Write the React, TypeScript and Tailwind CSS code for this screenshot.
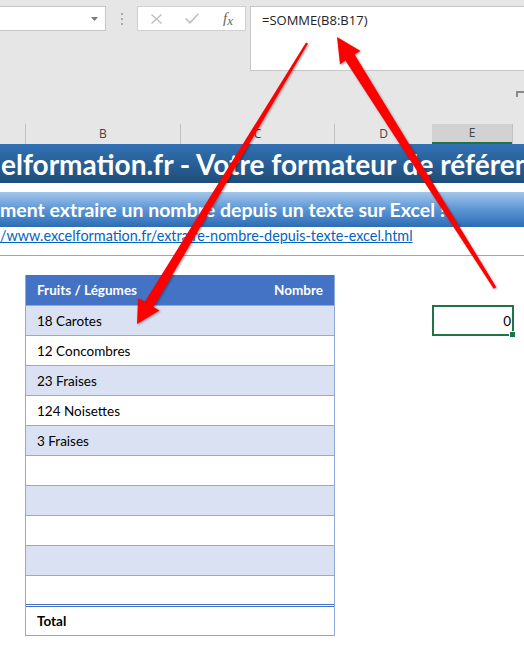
import React from "react";

const rows: { text: string; light: boolean }[] = [
  { text: "18 Carotes", light: true },
  { text: "12 Concombres", light: false },
  { text: "23 Fraises", light: true },
  { text: "124 Noisettes", light: false },
  { text: "3 Fraises", light: true },
  { text: "", light: false },
  { text: "", light: true },
  { text: "", light: false },
  { text: "", light: true },
];

export default function App() {
  return (
    <div className="relative w-[524px] h-[646px] overflow-hidden bg-white font-['Lato',sans-serif]">
      {/* Ribbon / formula bar */}
      <div className="bg-[#e6e6e6] h-[124px] flex flex-col">
        <div className="flex items-start pt-[6px] h-[71px]">
          <div className="w-[106px] h-[25px] bg-white border border-l-0 border-[#c6c6c6] flex items-center justify-end pr-[7px]">
            <svg width="7" height="4" viewBox="0 0 7 4">
              <path d="M0 0 H7 L3.5 4 Z" fill="#7a7a7a" />
            </svg>
          </div>
          <div className="w-[31px] h-[25px] flex flex-col items-center justify-center gap-[3px]">
            <div className="w-[2px] h-[2px] bg-[#a8a8a8]" />
            <div className="w-[2px] h-[2px] bg-[#a8a8a8]" />
            <div className="w-[2px] h-[2px] bg-[#a8a8a8]" />
          </div>
          <div className="w-[109px] h-[25px] bg-white border border-[#d0d0d0] flex items-center">
            <div className="w-[36px] flex justify-center">
              <svg width="11" height="10" viewBox="0 0 11 10">
                <path d="M0.5 0.5 L10.5 9.5 M10.5 0.5 L0.5 9.5" stroke="#bdbdbd" strokeWidth="1.3" fill="none" />
              </svg>
            </div>
            <div className="w-[35px] flex justify-center">
              <svg width="14" height="11" viewBox="0 0 14 11">
                <path d="M0.7 5.5 L5 9.8 L13.3 0.8" stroke="#bdbdbd" strokeWidth="1.5" fill="none" />
              </svg>
            </div>
            <div className="w-[36px] flex justify-center pl-[2px] font-['Liberation_Serif',serif] italic text-[15px] leading-none text-[#666]">
              <span>f</span>
              <span className="text-[13px] mt-[3px]">x</span>
            </div>
          </div>
          <div className="w-[4px]" />
          <div className="flex-1 h-[65px] bg-white border border-r-0 border-[#c6c6c6] pl-[11px] pt-[4px] text-[13px] leading-[18px] text-[#222] font-['Open_Sans',sans-serif]">
            =SOMME(B8:B17)
          </div>
        </div>
        <div className="flex-1 flex justify-end pt-[20px]">
          <div className="w-[8px] h-[6px] border-l-2 border-t-2 border-[#8a8a8a]" />
        </div>
      </div>

      {/* Column headers */}
      <div className="flex h-[20px] bg-[#e6e6e6] text-[12px] text-[#444] font-['Open_Sans',sans-serif]">
        <div className="w-[26px] border-r border-[#c0c0c0]" />
        <div className="w-[155px] border-r border-[#c0c0c0] flex items-center justify-center">B</div>
        <div className="w-[154px] border-r border-[#c0c0c0] flex items-center justify-center">C</div>
        <div className="w-[97px] flex items-center justify-center">D</div>
        <div className="w-[80px] bg-[#d2d2d2] border-b-2 border-[#217346] flex items-center justify-center">E</div>
        <div className="flex-1 border-l border-[#c0c0c0]" />
      </div>

      {/* Title */}
      <div className="h-[39px] bg-linear-to-b from-[#3272b5] to-[#1e4d7a] flex items-center whitespace-nowrap overflow-hidden text-white font-bold text-[28px] leading-none pl-[1px]">
        elformation.fr - Votre formateur de référence
      </div>
      <div className="h-[9px]" />
      <div className="h-[35px] bg-linear-to-b from-[#a3c6ea] via-[#5a95d4] to-[#2d6db5] flex items-center whitespace-nowrap overflow-hidden text-white font-bold text-[19.5px] leading-none">
        ment extraire un nombre depuis un texte sur Excel !
      </div>
      <div className="h-[29px] border-b border-[#a6a6a6] whitespace-nowrap overflow-hidden text-[14.4px] leading-[18px]">
        <span className="text-[#0563c1] underline">/www.excelformation.fr/extraire-nombre-depuis-texte-excel.html</span>
      </div>

      {/* Sheet body */}
      <div className="flex items-start mt-[19px] text-[13.5px] text-black">
        <div className="w-[25px]" />
        <div className="w-[310px] border-x border-[#8ea9db] flex flex-col">
          <div className="h-[30px] bg-[#4472c4] text-white font-bold flex items-center justify-between pl-[11px] pr-[11px] pt-[1px]">
            <span>Fruits / Légumes</span>
            <span>Nombre</span>
          </div>
          {rows.map((r, i) => (
            <div
              key={i}
              className={`h-[30px] border-t border-[#8ea9db] flex items-center pl-[11px] pt-[2px] ${r.light ? "bg-[#d9e1f2]" : "bg-white"}`}
            >
              {r.text}
            </div>
          ))}
          <div className="h-[29px] border-t border-[#8ea9db] bg-white" />
          <div className="h-[3px] border-y border-[#4472c4]" />
          <div className="h-[29px] border-b border-[#8ea9db] flex items-center pl-[11px] pt-[1px] font-bold">Total</div>
        </div>
        <div className="w-[97px]" />
        <div className="flex flex-col pt-[30px]">
          <div className="relative w-[82px] h-[31px] border-2 border-[#217346] flex items-center justify-end pr-[1px] pt-[1px]">
            0
            <div className="absolute -right-[4px] -bottom-[4px] w-[7px] h-[7px] bg-[#217346] border border-white" />
          </div>
        </div>
      </div>

      {/* Red arrows */}
      <svg
        className="absolute left-0 top-0 pointer-events-none drop-shadow-[1px_1px_1px_rgba(0,0,0,0.35)]"
        width="524"
        height="646"
        viewBox="0 0 524 646"
      >
        <polygon
          points="306,42.4 308,43.6 153.5,307 159.5,310.5 137,324 138,298.5 145,301.5"
          fill="#ff0000"
        />
        <polygon
          points="493.7,288.8 496.3,287.2 354.6,54.6 360.5,51 337,37 340,64.5 345.4,60.4"
          fill="#ff0000"
        />
      </svg>
    </div>
  );
}
